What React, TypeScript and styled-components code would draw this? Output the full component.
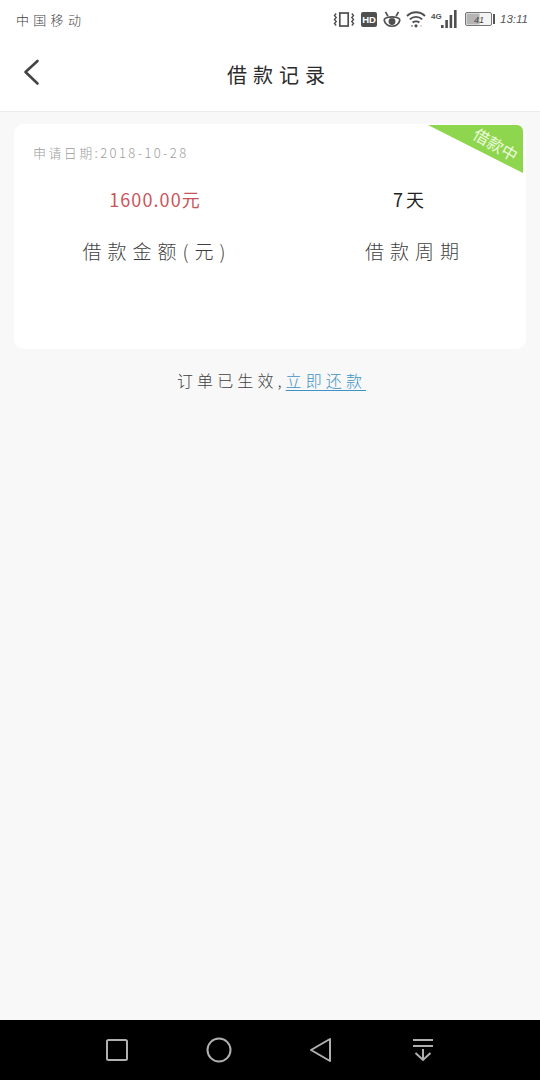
import React from 'react';
import styled, { createGlobalStyle } from 'styled-components';

const GlobalStyle = createGlobalStyle`
  html, body {
    margin: 0;
    padding: 0;
    background: #f8f8f8;
    font-family: "Noto Sans CJK SC", "Noto Sans", sans-serif;
  }
`;

const Page = styled.div`
  width: 540px;
  height: 1080px;
  display: flex;
  flex-direction: column;
  background: #f8f8f8;
  overflow: hidden;
`;

const TopArea = styled.header`
  height: 112px;
  box-sizing: border-box;
  background: #fff;
  border-bottom: 1px solid #ececec;
  display: flex;
  flex-direction: column;
`;

const StatusBar = styled.div`
  height: 38px;
  display: flex;
  align-items: center;
  justify-content: space-between;
  padding: 0 12px 0 16px;
`;

const Carrier = styled.span`
  font-size: 13px;
  font-weight: 300;
  letter-spacing: 4.3px;
  color: #444;
`;

const StatusIcons = styled.div`
  display: flex;
  align-items: center;
  color: #4f4f4f;
`;

const Clock = styled.span`
  font-family: "Liberation Sans", sans-serif;
  font-style: italic;
  font-size: 11.5px;
  letter-spacing: 0;
  color: #555;
  margin-left: 5px;
`;

const NavBar = styled.div`
  flex: 1;
  display: flex;
  align-items: center;
  justify-content: center;
  position: relative;
`;

const BackButton = styled.button`
  position: absolute;
  left: 21px;
  top: 20px;
  padding: 0;
  border: none;
  background: none;
  display: flex;
`;

const Title = styled.h1`
  margin: 0;
  padding-left: 18px;
  font-size: 20px;
  font-weight: 400;
  letter-spacing: 6px;
  color: #2b2b2b;
`;

const Content = styled.main`
  flex: 1;
  padding: 12px 14px 0;
`;

const Card = styled.section`
  position: relative;
  height: 225px;
  box-sizing: border-box;
  background: #fff;
  border-radius: 10px;
  padding-top: 19px;
`;

const Ribbon = styled.div`
  position: absolute;
  top: 1px;
  right: 3px;
  width: 95px;
  height: 48px;
  border-top-right-radius: 6px;
  background: #8fd64f;
  clip-path: polygon(0 0, 100% 0, 100% 100%);
`;

const RibbonText = styled.span`
  position: absolute;
  top: 10px;
  right: 3px;
  font-size: 16px;
  line-height: 18px;
  color: #eefadf;
  transform: rotate(30deg);
  white-space: nowrap;
`;

const DateLine = styled.div`
  padding-left: 19px;
  font-size: 13px;
  line-height: 20px;
  font-weight: 300;
  letter-spacing: 2.4px;
  color: #9c9c9c;
`;

const Stats = styled.div`
  display: grid;
  grid-template-columns: 282px 228px;
  margin-top: 23px;
  text-align: center;
`;

const Stat = styled.div`
  display: flex;
  flex-direction: column;
  gap: 26px;
`;

const Value = styled.div<{ $accent?: boolean }>`
  font-size: 18px;
  line-height: 26px;
  letter-spacing: ${({ $accent }) => ($accent ? '1.1px' : '3px')};
  color: ${({ $accent }) => ($accent ? '#c9555c' : '#222')};
`;

const Label = styled.div<{ $inset?: number }>`
  padding-left: ${({ $inset }) => $inset ?? 0}px;
  font-size: 19px;
  line-height: 26px;
  font-weight: 300;
  letter-spacing: 6px;
  color: #3f3f3f;
`;

const Notice = styled.p`
  margin: 20px 0 0;
  padding-left: 3px;
  text-align: center;
  font-size: 16px;
  line-height: 22px;
  font-weight: 300;
  letter-spacing: 4.1px;
  color: #3f3f3f;
`;

const RepayLink = styled.a`
  color: #3d93c6;
  text-decoration: underline;
  text-underline-offset: 3px;
`;

const SystemBar = styled.nav`
  height: 60px;
  flex-shrink: 0;
  background: #000;
  display: grid;
  grid-template-columns: repeat(4, 102px);
  justify-content: center;
  justify-items: center;
  align-items: center;
`;

const VibrateIcon = () => (
  <svg width="22" height="15" viewBox="0 0 22 15" fill="none" stroke="currentColor">
    <rect x="6.8" y="1" width="8.4" height="13" strokeWidth="1.7" />
    <path d="M3.2 1.5l-1.7 2 1.7 2-1.7 2 1.7 2-1.7 2 1.7 2M18.8 1.5l1.7 2-1.7 2 1.7 2-1.7 2 1.7 2-1.7 2" strokeWidth="1.4" />
  </svg>
);

const HdIcon = () => (
  <svg width="16" height="15" viewBox="0 0 16 15" style={{ marginLeft: 6 }}>
    <rect width="16" height="15" rx="2" fill="#4f4f4f" />
    <text x="8" y="11" textAnchor="middle" fontSize="9.5" fontWeight="700" fontFamily="Liberation Sans" fill="#fff">HD</text>
  </svg>
);

const EyeIcon = () => (
  <svg width="18" height="17" viewBox="0 0 18 17" fill="none" stroke="currentColor" style={{ marginLeft: 6 }}>
    <path d="M1 8.5C4 5 14 5 17 8.5M1 8.5C2.5 17.5 15.5 17.5 17 8.5" strokeWidth="1.7" />
    <circle cx="9" cy="10.5" r="3.4" fill="currentColor" stroke="none" />
    <path d="M2.5 1l2.4 4.2M15.5 1l-2.4 4.2" strokeWidth="1.7" />
  </svg>
);

const WifiIcon = () => (
  <svg width="20" height="18" viewBox="0 0 20 18" fill="none" stroke="currentColor" strokeWidth="1.9" style={{ marginLeft: 5 }}>
    <path d="M1 6C6 1 14 1 19 6M3.8 9.4C7.5 6 12.5 6 16.2 9.4M6.6 12.6C8.5 11 11.5 11 13.4 12.6" />
    <circle cx="10" cy="15.8" r="1.6" fill="currentColor" stroke="none" />
    <circle cx="15" cy="16" r="0.8" fill="#aaa" stroke="none" />
    <circle cx="6" cy="16" r="0.8" fill="currentColor" stroke="none" />
  </svg>
);

const SignalIcon = () => (
  <svg width="26" height="18" viewBox="0 0 26 18" fill="currentColor" style={{ marginLeft: 5 }}>
    <text x="0" y="8.5" fontSize="8" fontWeight="700" fontFamily="Liberation Sans">4G</text>
    <rect x="10" y="15" width="2.6" height="3" />
    <rect x="14.3" y="10" width="2.6" height="8" />
    <rect x="18.6" y="5" width="2.6" height="13" />
    <rect x="23" y="0" width="2.6" height="18" />
  </svg>
);

const BatteryIcon = () => (
  <svg width="30" height="14" viewBox="0 0 30 14" style={{ marginLeft: 8 }}>
    <rect x=".5" y=".5" width="26" height="13" rx="1.5" fill="#f4f4f4" stroke="#777" />
    <rect x="1.5" y="1.5" width="13" height="11" fill="#b5b5b5" />
    <rect x="28" y="2" width="2" height="10" fill="#555" />
    <text x="14" y="10.5" textAnchor="middle" fontSize="9" fontStyle="italic" fontFamily="Liberation Sans" fill="#444">41</text>
  </svg>
);

const ChevronLeft = () => (
  <svg width="22" height="28" viewBox="0 0 22 28" fill="none" stroke="#444" strokeWidth="2.6" strokeLinecap="round" strokeLinejoin="round">
    <path d="M16.5 3L4.5 14l12 11.5" />
  </svg>
);

const SquareKey = () => (
  <svg width="24" height="24" viewBox="0 0 24 24" fill="none" stroke="#b0b0b0" strokeWidth="2">
    <rect x="2" y="2" width="20" height="20" rx="1.5" />
  </svg>
);

const CircleKey = () => (
  <svg width="26" height="26" viewBox="0 0 26 26" fill="none" stroke="#b0b0b0" strokeWidth="2">
    <circle cx="13" cy="13" r="11.5" />
  </svg>
);

const BackKey = () => (
  <svg width="24" height="26" viewBox="0 0 24 26" fill="none" stroke="#b0b0b0" strokeWidth="2" strokeLinejoin="round">
    <path d="M21 2L2 13l19 11z" />
  </svg>
);

const DownKey = () => (
  <svg width="22" height="24" viewBox="0 0 22 24" fill="none" stroke="#b0b0b0" strokeWidth="2">
    <path d="M1 2h20M1 8h20M11 11v11M3.5 15l7.5 7 7.5-7" />
  </svg>
);

const App: React.FC = () => {
  return (
    <Page>
      <GlobalStyle />
      <TopArea>
        <StatusBar>
          <Carrier>中国移动</Carrier>
          <StatusIcons>
            <VibrateIcon />
            <HdIcon />
            <EyeIcon />
            <WifiIcon />
            <SignalIcon />
            <BatteryIcon />
            <Clock>13:11</Clock>
          </StatusIcons>
        </StatusBar>
        <NavBar>
          <BackButton>
            <ChevronLeft />
          </BackButton>
          <Title>借款记录</Title>
        </NavBar>
      </TopArea>
      <Content>
        <Card>
          <Ribbon>
            <RibbonText>借款中</RibbonText>
          </Ribbon>
          <DateLine>申请日期:2018-10-28</DateLine>
          <Stats>
            <Stat>
              <Value $accent>1600.00元</Value>
              <Label $inset={4}>借款金额(元)</Label>
            </Stat>
            <Stat>
              <Value>7天</Value>
              <Label $inset={10}>借款周期</Label>
            </Stat>
          </Stats>
        </Card>
        <Notice>
          订单已生效,<RepayLink>立即还款</RepayLink>
        </Notice>
      </Content>
      <SystemBar>
        <SquareKey />
        <CircleKey />
        <BackKey />
        <DownKey />
      </SystemBar>
    </Page>
  );
};

export default App;
